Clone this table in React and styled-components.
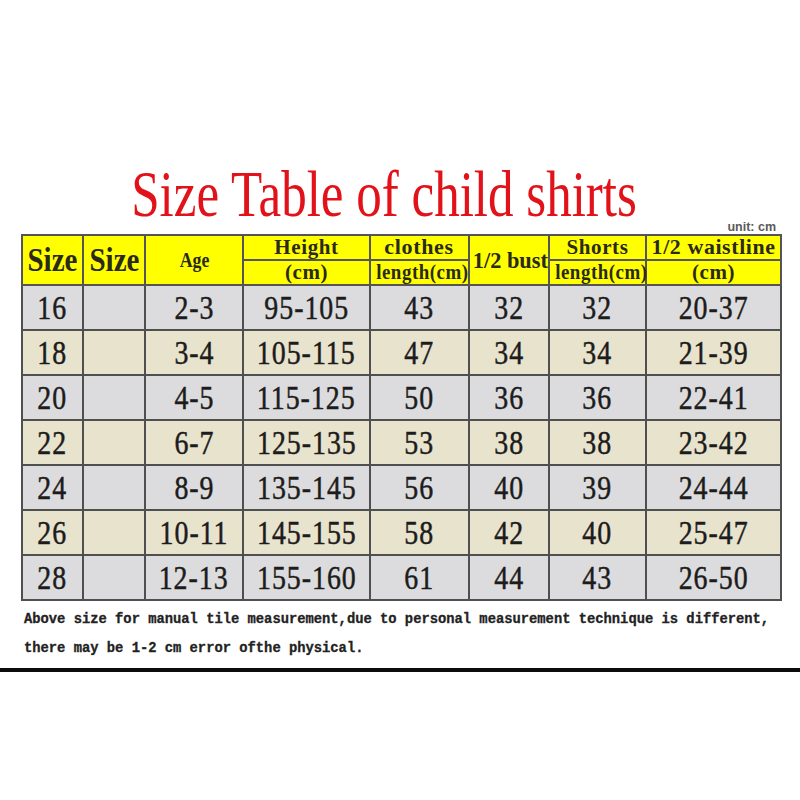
import styled, { createGlobalStyle } from 'styled-components';

const GlobalStyle = createGlobalStyle`
  html, body {
    margin: 0;
    padding: 0;
    background: #ffffff;
  }
`;

const rows = [
  ['16', '2-3', '95-105', '43', '32', '32', '20-37'],
  ['18', '3-4', '105-115', '47', '34', '34', '21-39'],
  ['20', '4-5', '115-125', '50', '36', '36', '22-41'],
  ['22', '6-7', '125-135', '53', '38', '38', '23-42'],
  ['24', '8-9', '135-145', '56', '40', '39', '24-44'],
  ['26', '10-11', '145-155', '58', '42', '40', '25-47'],
  ['28', '12-13', '155-160', '61', '44', '43', '26-50'],
];

const colWidths = [61, 62, 98, 127, 99, 80, 97, 135];

export default function App() {
  return (
    <Page>
      <GlobalStyle />
      <TitleRow>
        <span />
        <Title>
          <Squeeze $sx={0.785}>Size Table of child shirts</Squeeze>
        </Title>
        <Unit>unit: cm</Unit>
      </TitleRow>

      <Table>
        <colgroup>
          {colWidths.map((w, i) => (
            <col key={i} style={{ width: w }} />
          ))}
        </colgroup>
        <thead>
          <HeadRow>
            <Th rowSpan={2}>
              <Squeeze $size={33} $sx={0.88}>Size</Squeeze>
            </Th>
            <Th rowSpan={2}>
              <Squeeze $size={33} $sx={0.88}>Size</Squeeze>
            </Th>
            <Th rowSpan={2}>
              <Squeeze $size={21} $sx={0.85}>Age</Squeeze>
            </Th>
            <Th>
              <Label>Height</Label>
            </Th>
            <Th>
              <Label $sx={1.05}>clothes</Label>
            </Th>
            <Th rowSpan={2}>
              <Squeeze $size={24} $sx={0.93}>1/2 bust</Squeeze>
            </Th>
            <Th>
              <Label>Shorts</Label>
            </Th>
            <Th>
              <Label $sx={1.04}>1/2 waistline</Label>
            </Th>
          </HeadRow>
          <HeadRow>
            <Th>
              <Label>(cm)</Label>
            </Th>
            <Th>
              <Label $sx={0.9}>length(cm)</Label>
            </Th>
            <Th>
              <Label $sx={0.9}>length(cm)</Label>
            </Th>
            <Th>
              <Label>(cm)</Label>
            </Th>
          </HeadRow>
        </thead>
        <tbody>
          {rows.map((r, i) => (
            <BodyRow key={r[0]} $alt={i % 2 === 1}>
              <Td>
                <Num>{r[0]}</Num>
              </Td>
              <Td />
              {r.slice(1).map((v, j) => (
                <Td key={j}>
                  <Num>{v}</Num>
                </Td>
              ))}
            </BodyRow>
          ))}
        </tbody>
      </Table>

      <Note>
        Above size for manual tile measurement,due to personal measurement technique is different,
        <br />
        there may be 1-2 cm error ofthe physical.
      </Note>
      <Rule />
    </Page>
  );
}

const Page = styled.div`
  padding-top: 162px;
  font-family: "Liberation Serif", "Times New Roman", serif;
  color: #1e1e1e;
`;

const TitleRow = styled.div`
  display: grid;
  grid-template-columns: 1fr auto 1fr;
  height: 72px;
  padding: 0 22px 0 21px;
`;

const Title = styled.h1`
  display: flex;
  justify-content: center;
  margin: 0 30px 0 0;
  width: 510px;
  align-self: start;
  font-family: "Liberation Serif", "Times New Roman", serif;
  font-weight: normal;
  font-size: 65px;
  line-height: 65px;
  color: #e2121a;
  white-space: nowrap;
`;

const Squeeze = styled.span`
  display: inline-block;
  flex-shrink: 0;
  white-space: nowrap;
  font-size: ${(p) => (p.$size ? `${p.$size}px` : 'inherit')};
  transform: scaleX(${(p) => p.$sx || 1});
`;

const Unit = styled.div`
  justify-self: end;
  align-self: end;
  margin: 0 2px 1px 0;
  font-family: "Liberation Sans", Arial, sans-serif;
  font-size: 12.5px;
  line-height: 12px;
  font-weight: bold;
  color: #5a5a5a;
`;

const Table = styled.table`
  margin-left: 21px;
  width: 759px;
  table-layout: fixed;
  border-collapse: collapse;
  border: 2px solid #4d4d4d;
`;

const HeadRow = styled.tr`
  height: 25px;
  background: #ffff00;
`;

const Th = styled.th`
  border: 2px solid #555;
  padding: 0;
  font-weight: bold;
  text-align: center;
  vertical-align: middle;
  line-height: 1;
  color: #2a2a1a;
  white-space: nowrap;
  overflow: visible;
`;

const Label = styled.span`
  display: inline-block;
  font-size: 21px;
  letter-spacing: 0.6px;
  transform: scaleX(${(p) => p.$sx || 1});
`;

const BodyRow = styled.tr`
  height: 45px;
  background: ${(p) => (p.$alt ? '#e8e3cd' : '#dcdcde')};
`;

const Td = styled.td`
  border: 2px solid #4f4f4f;
  padding: 0;
  text-align: center;
  vertical-align: middle;
  line-height: 1;
  white-space: nowrap;
`;

const Num = styled.span`
  display: inline-block;
  font-size: 34px;
  letter-spacing: 1.2px;
  transform: scaleX(0.82);
  color: #1c1c1c;
  -webkit-text-stroke: 0.5px #1c1c1c;
`;

const Note = styled.p`
  margin: 4px 0 0 24px;
  font-family: "Liberation Mono", "Courier New", monospace;
  font-weight: bold;
  font-size: 13.8px;
  line-height: 29px;
  color: #222;
  white-space: nowrap;
  -webkit-text-stroke: 0.3px #222;
`;

const Rule = styled.div`
  margin-top: 5px;
  height: 4px;
  background: #0c0c0c;
`;
